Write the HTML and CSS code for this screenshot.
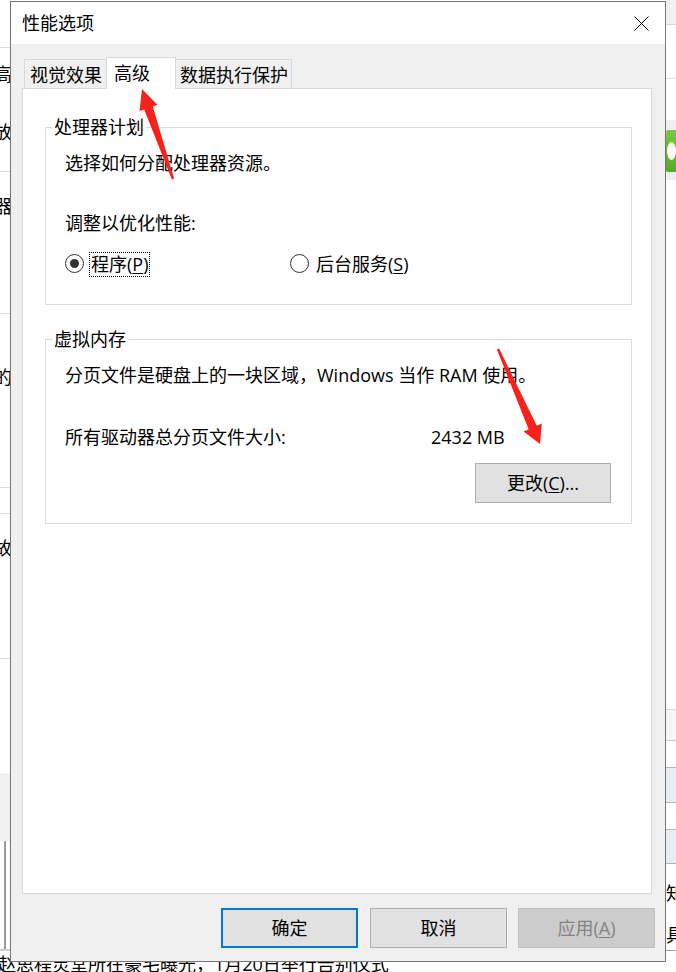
FILE: index.html
```html
<!DOCTYPE html>
<html lang="zh-CN">
<head>
<meta charset="utf-8">
<title>性能选项</title>
<link rel="stylesheet" href="styles.css">
</head>
<body>
<div class="desk">
  <div class="bg">
    <div class="bg-left">
      <div class="bl r0"></div>
      <div class="bl r1"><span class="bt">高级</span><span class="bt t2">放，</span></div>
      <div class="bl r2"><span class="bt">器</span></div>
      <div class="bl r3"><span class="bt">的</span></div>
      <div class="bl r4"></div>
      <div class="bl r5"><span class="bt">故</span></div>
      <div class="r6"></div>
      <div class="r7"></div>
      <div class="r8"><div class="vline"></div></div>
    </div>
    <div class="bg-mid"></div>
    <div class="bg-right">
      <div class="rr rr0"></div>
      <div class="rr rr1"></div>
      <div class="rr rr2"></div>
      <div class="rr rr3"><div class="green"><div class="bubble"></div></div></div>
      <div class="rr rr4"></div>
      <div class="rr rr5"></div>
      <div class="rr rr6"></div>
      <div class="rr rr7"></div>
      <div class="rr rr8"></div>
      <div class="rr rr9"></div>
      <div class="rr rr10"><span class="rt">知道</span><span class="rt t2">具体</span></div>
    </div>
    <div class="bg-foot">赵思程灵堂所在豪宅曝光，1月20日举行告别仪式</div>
  </div>

  <div class="dialog">
    <div class="titlebar">
      <span class="title">性能选项</span>
      <span class="close">
        <svg viewBox="0 0 15 15"><path d="M0.5 0.5 L14.5 14.5 M14.5 0.5 L0.5 14.5" stroke="#000" stroke-width="1" fill="none"/></svg>
      </span>
    </div>
    <div class="body">
      <div class="tabs">
        <div class="tab tab-1">视觉效果</div>
        <div class="tab tab-2">高级</div>
        <div class="tab tab-3">数据执行保护</div>
      </div>
      <div class="panel">
        <div class="group g1">
          <div class="legend">处理器计划</div>
          <div class="line">选择如何分配处理器资源。</div>
          <div class="line adj">调整以优化性能:</div>
          <div class="radios">
            <div class="radio radio-first"><span class="dot on"></span><span class="rlabel focus">程序(<u>P</u>)</span></div>
            <div class="radio"><span class="dot"></span><span class="rlabel">后台服务(<u>S</u>)</span></div>
          </div>
        </div>
        <div class="group g2">
          <div class="legend">虚拟内存</div>
          <div class="line">分页文件是硬盘上的一块区域，Windows 当作 RAM 使用。</div>
          <div class="kv"><span class="k">所有驱动器总分页文件大小:</span><span class="v">2432 MB</span></div>
          <div class="btnrow"><button class="btn">更改(<u>C</u>)...</button></div>
        </div>
      </div>
      <div class="actions">
        <button class="btn btn-lg btn-default">确定</button>
        <button class="btn btn-lg btn-cancel">取消</button>
        <button class="btn btn-lg btn-disabled">应用(<u>A</u>)</button>
      </div>
    </div>
  </div>

  <svg class="marks" width="676" height="972" viewBox="0 0 676 972">
    <polygon points="142,89 157.5,104.8 152.8,106.4 174.1,178.6 171.9,179.4 144.2,109.4 139.5,111" fill="#f7221b"/>
    <polygon points="540,444 541.8,423.5 536.8,425.7 499.1,348.5 496.9,349.5 528.6,429.3 523.6,431.5" fill="#f7221b"/>
  </svg>
</div>
</body>
</html>
```

FILE: styles.css
```css
* { box-sizing: border-box; }
html, body { margin: 0; padding: 0; }
body {
  width: 676px;
  height: 972px;
  overflow: hidden;
  background: #fff;
  font-family: "Open Sans", "Noto Sans CJK SC", sans-serif;
  font-size: 18px;
  color: #000;
}
.desk { position: relative; width: 676px; height: 972px; overflow: hidden; }

/* background page behind the dialog */
.bg {
  display: grid;
  grid-template-columns: 40px 1fr 12px;
  grid-template-rows: 952px 20px;
  height: 972px;
}
.bg-left { display: flex; flex-direction: column; overflow: hidden; white-space: nowrap; }
.bl { flex: none; border-bottom: 1px solid #dcdcdc; }
.bt { display: block; line-height: 24px; margin-left: -6px; }
.r0 { height: 48px; }
.r1 { height: 124px; padding-top: 14px; }
.r1 .t2 { margin-top: 34px; }
.r2 { height: 142px; padding-top: 22px; }
.r3 { height: 174px; padding-top: 51px; }
.r4 { height: 26px; }
.r5 { height: 145px; padding-top: 22px; }
.r6 { flex: none; height: 114px; }
.r7 { flex: none; height: 68px; background: #f0f0f0; }
.r8 { flex: none; height: 110px; border-bottom: 2px solid #cfcfcf; padding-left: 4px; }
.vline { width: 2px; height: 100%; background: #9a9a9a; }

.bg-right { display: flex; flex-direction: column; overflow: hidden; white-space: nowrap; padding-left: 2px; }
.rr { flex: none; }
.rr0 { height: 25px; background: #f0f0f0; border-bottom: 1px solid #d5d5d5; }
.rr1 { height: 54px; border-bottom: 1px solid #e3e3e3; }
.rr2 { height: 41px; }
.rr3 { height: 60px; background: #efefef; padding-top: 10px; }
.green {
  height: 42px;
  background: linear-gradient(#78c83c, #55ad24);
  border-radius: 2px 0 0 2px;
  display: flex;
  align-items: center;
  padding-left: 1px;
}
.bubble { width: 20px; height: 18px; border-radius: 50%; background: #fff; }
.rr4 { height: 530px; border-bottom: 1px solid #d9d9d9; }
.rr5 { height: 31px; background: #f6f6f6; border-bottom: 1px solid #c8c8c8; }
.rr6 { height: 26px; }
.rr7 { height: 36px; background: #e5edf7; border-top: 1px solid #b3b3b3; border-bottom: 1px solid #b3b3b3; }
.rr8 { height: 26px; }
.rr9 { height: 35px; background: #e5edf7; border-top: 1px solid #b3b3b3; border-bottom: 1px solid #b3b3b3; }
.rr10 { height: 87px; padding-top: 17px; border-bottom: 1px solid #a0a0a0; }
.rt { display: block; line-height: 24px; }
.rr10 .t2 { margin-top: 18px; }

.bg-foot {
  grid-column: 1 / -1;
  line-height: 24px;
  margin-left: -2px;
  white-space: nowrap;
}

/* dialog window */
.dialog {
  position: absolute;
  left: 10px;
  top: 1px;
  width: 656px;
  height: 961px;
  border: 1px solid #767676;
  background: #f0f0f0;
  display: flex;
  flex-direction: column;
  z-index: 2;
}
.titlebar {
  flex: none;
  height: 42px;
  background: #fff;
  display: flex;
  align-items: center;
  justify-content: space-between;
  padding-left: 11px;
}
.title { line-height: 24px; }
.close { width: 47px; height: 42px; display: flex; align-items: center; justify-content: center; }
.close svg { width: 15px; height: 15px; display: block; }

.body {
  flex: 1;
  min-height: 0;
  display: flex;
  flex-direction: column;
  padding: 13px 13px 13px 11px;
}
.tabs { flex: none; height: 31px; display: flex; align-items: flex-end; padding-left: 2px; }
.tab {
  height: 29px;
  border: 1px solid #d9d9d9;
  border-bottom: none;
  background: #f0f0f0;
  padding: 3px 0 0 5px;
  line-height: 24px;
  white-space: nowrap;
}
.tab-1 { width: 83px; }
.tab-2 {
  width: 70px;
  height: 32px;
  margin-left: -1px;
  margin-bottom: -1px;
  padding-left: 7px;
  background: #fff;
  position: relative;
  z-index: 1;
}
.tab-3 { width: 117px; margin-left: -1px; padding-left: 4px; }

.panel {
  flex: 1;
  min-height: 0;
  background: #fff;
  border: 1px solid #d9d9d9;
  padding: 38px 19px 0 22px;
}
.group { border: 1px solid #dcdcdc; }
.g1 { padding: 0 20px 28px 19px; }
.g2 { margin-top: 34px; padding: 0 20px 20px 19px; }
.legend {
  display: table;
  margin: -13px 0 0 -13px;
  padding: 0 2px;
  background: #fff;
  line-height: 24px;
}
.line { line-height: 24px; margin-top: 12px; white-space: nowrap; }
.line.adj { margin-top: 36px; }

.radios { display: flex; height: 25px; margin-top: 16px; }
.radio { display: flex; align-items: flex-start; }
.radio-first { width: 225px; flex: none; }
.dot {
  flex: none;
  width: 19px;
  height: 19px;
  margin-top: 3px;
  border: 1px solid #333;
  border-radius: 50%;
  display: flex;
  align-items: center;
  justify-content: center;
}
.dot.on::after { content: ""; width: 9px; height: 9px; border-radius: 50%; background: #333; }
.rlabel {
  margin: 1px 0 0 5px;
  padding: 0 1px;
  border: 1px dotted transparent;
  line-height: 23px;
  white-space: nowrap;
}
.rlabel.focus { border-color: #000; }
u { text-decoration: underline; text-underline-offset: 2px; text-decoration-thickness: 1px; }

.kv { display: flex; margin-top: 38px; line-height: 24px; white-space: nowrap; }
.kv .k { flex: none; width: 366px; }
.btnrow { display: flex; justify-content: flex-end; margin-top: 14px; }

.btn {
  font: inherit;
  color: inherit;
  margin: 0;
  padding: 0;
  width: 136px;
  height: 40px;
  border: 1px solid #adadad;
  background: #e1e1e1;
  line-height: 24px;
  display: flex;
  align-items: center;
  justify-content: center;
}
.actions { flex: none; display: flex; justify-content: flex-end; margin: 14px -3px 0 0; }
.btn-lg { width: 137px; }
.btn-default { border: 2px solid #0078d7; }
.btn-cancel { margin-left: 12px; }
.btn-disabled { margin-left: 11px; background: #cccccc; border-color: #bfbfbf; color: #838383; }

.marks { position: absolute; left: 0; top: 0; z-index: 5; pointer-events: none; }
```
